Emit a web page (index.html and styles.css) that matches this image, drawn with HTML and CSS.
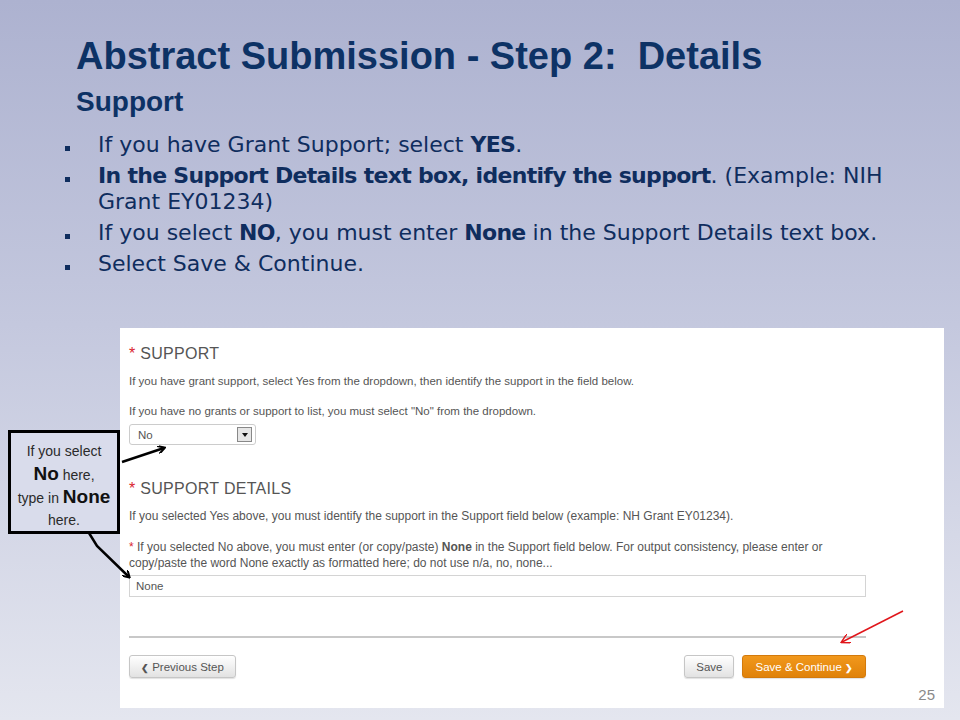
FILE: index.html
```html
<!DOCTYPE html>
<html lang="en">
<head>
    <meta charset="UTF-8">
    <meta name="viewport" content="width=device-width, initial-scale=1.0">
    <title>Abstract Submission - Step 2</title>
    <link rel="stylesheet" href="styles.css">
</head>
<body>
    <div class="slide">
        <h1 class="title">Abstract Submission - Step 2:&nbsp; Details</h1>
        <h2 class="subtitle">Support</h2>

        <ul class="bullets">
            <li>If you have Grant Support; select <b>YES</b>.</li>
            <li><b>In the Support Details text box, identify the support</b>. (Example: NIH Grant EY01234)</li>
            <li>If you select <b>NO</b>, you must enter <b>None</b> in the Support Details text box.</li>
            <li>Select Save &amp; Continue.</li>
        </ul>

        <div class="panel">
            <h3 class="field-title"><span class="req">*</span> SUPPORT</h3>
            <p class="help">If you have grant support, select Yes from the dropdown, then identify the support in the field below.</p>
            <p class="help">If you have no grants or support to list, you must select "No" from the dropdown.</p>
            <div class="select">
                <span>No</span>
                <span class="select-btn"><span class="caret"></span></span>
            </div>

            <h3 class="field-title details"><span class="req">*</span> SUPPORT DETAILS</h3>
            <p class="help wide">If you selected Yes above, you must identify the support in the Support field below (example: NH Grant EY01234).</p>
            <p class="help wide note"><span class="req">*</span> If you selected No above, you must enter (or copy/paste) <b>None</b> in the Support field below. For output consistency, please enter or copy/paste the word None exactly as formatted here; do not use n/a, no, none...</p>
            <div class="text-input">None</div>

            <div class="divider"></div>

            <div class="actions">
                <button class="btn"><span class="chev">&#10094;</span> Previous Step</button>
                <div class="actions-right">
                    <button class="btn">Save</button>
                    <button class="btn btn-orange">Save &amp; Continue <span class="chev">&#10095;</span></button>
                </div>
            </div>
            <div class="page-num">25</div>
        </div>

        <div class="callout">
            <div>If you select</div>
            <div><span class="big">No</span> here,</div>
            <div>type in <span class="big">None</span></div>
            <div>here.</div>
        </div>

        <svg class="arrows" width="960" height="720" viewBox="0 0 960 720">
            <defs>
                <marker id="headBlack" markerWidth="8" markerHeight="8" refX="6" refY="4" orient="auto" markerUnits="userSpaceOnUse">
                    <path d="M0,0 L7,4 L0,8" fill="none" stroke="#000" stroke-width="2"/>
                </marker>
                <marker id="headRed" markerWidth="10" markerHeight="10" refX="8" refY="5" orient="auto" markerUnits="userSpaceOnUse">
                    <path d="M0,0 L9,5 L0,10" fill="none" stroke="#e0161b" stroke-width="1.5"/>
                </marker>
            </defs>
            <line x1="122" y1="462" x2="164" y2="448" stroke="#000" stroke-width="2.5" marker-end="url(#headBlack)"/>
            <path d="M89 533 L97 546 L129 577" fill="none" stroke="#000" stroke-width="2.5" marker-end="url(#headBlack)"/>
            <line x1="903" y1="611" x2="842" y2="642" stroke="#e0161b" stroke-width="1.5" marker-end="url(#headRed)"/>
        </svg>
    </div>
</body>
</html>
```

FILE: styles.css
```css
body {
    margin: 0;
    padding: 0;
    font-family: "Liberation Sans", Arial, sans-serif;
}

.slide {
    position: relative;
    width: 960px;
    height: 720px;
    overflow: hidden;
    background: linear-gradient(to bottom, #adb2d0 0%, #c4c8de 45%, #e4e6ef 100%);
}

.title {
    margin: 0;
    padding: 34px 0 0 76px;
    font-size: 38px;
    line-height: 44px;
    font-weight: bold;
    color: #0d3265;
}

.subtitle {
    margin: 7px 0 0 0;
    padding-left: 76px;
    font-size: 28px;
    line-height: 34px;
    font-weight: bold;
    color: #0d3265;
}

.bullets {
    list-style: none;
    margin: 13px 0 0 0;
    padding: 0 50px 0 98px;
    color: #0f2d5e;
    font-family: "DejaVu Sans", Verdana, sans-serif;
    font-size: 22px;
    line-height: 26px;
}

.bullets li {
    position: relative;
    margin-bottom: 5px;
}

.bullets li:last-child {
    margin-bottom: 0;
}

.bullets li::before {
    content: "";
    position: absolute;
    left: -33px;
    top: 14px;
    width: 5px;
    height: 5px;
    background: #0f2d5e;
}

.bullets b {
    font-weight: bold;
    letter-spacing: -0.7px;
}

.panel {
    position: relative;
    margin: 51px 0 0 120px;
    width: 824px;
    height: 380px;
    box-sizing: border-box;
    padding: 16px 78px 0 9px;
    background: #fff;
    color: #555;
}

.field-title {
    margin: 0;
    font-size: 16px;
    line-height: 20px;
    font-weight: normal;
    color: #555;
    letter-spacing: 0.3px;
}

.field-title.details {
    margin-top: 34px;
}

.req {
    color: #d9262e;
}

.help {
    margin: 9px 0 0 0;
    font-size: 11.5px;
    line-height: 16px;
    color: #555;
}

.help.wide {
    font-size: 12px;
}

.help + .help {
    margin-top: 14px;
}

.help.note {
    margin-top: 15px;
}

.select {
    display: flex;
    align-items: center;
    justify-content: space-between;
    width: 127px;
    height: 21px;
    margin-top: 5px;
    box-sizing: border-box;
    padding: 0 3px 0 8px;
    border: 1px solid #ccc;
    border-radius: 3px;
    font-size: 11.5px;
    color: #555;
}

.select-btn {
    display: flex;
    align-items: center;
    justify-content: center;
    width: 13px;
    height: 13px;
    border: 1px solid #888;
    background: #e6e6e6;
}

.caret {
    width: 0;
    height: 0;
    border-left: 3px solid transparent;
    border-right: 3px solid transparent;
    border-top: 4px solid #111;
}

.text-input {
    height: 22px;
    margin-top: 4px;
    box-sizing: border-box;
    padding: 0 6px;
    border: 1px solid #d4d4d4;
    font-size: 11.5px;
    line-height: 20px;
    color: #555;
}

.divider {
    height: 2px;
    margin-top: 39px;
    background: #c8c8c8;
}

.actions {
    display: flex;
    justify-content: space-between;
    margin-top: 17px;
}

.actions-right {
    display: flex;
    gap: 8px;
}

.btn {
    height: 23px;
    padding: 0 11px;
    font-family: "Liberation Sans", Arial, sans-serif;
    font-size: 11.5px;
    color: #555;
    background: linear-gradient(to bottom, #ffffff, #e2e2e2);
    border: 1px solid #c6c6c6;
    border-radius: 3px;
    box-shadow: 0 1px 1px rgba(0, 0, 0, 0.12);
}

.btn .chev {
    font-size: 9px;
    font-weight: bold;
}

.btn-orange {
    padding: 0 12px;
    color: #fff;
    background: linear-gradient(to bottom, #f1981c, #e0820a);
    border-color: #d37a0c;
}

.page-num {
    position: absolute;
    right: 9px;
    bottom: 5px;
    font-size: 15px;
    color: #8a8a8a;
}

.callout {
    position: absolute;
    left: 8px;
    top: 430px;
    width: 112px;
    height: 104px;
    box-sizing: border-box;
    padding-top: 8px;
    border: 3px solid #000;
    background: #d9dceb;
    text-align: center;
    font-size: 14px;
    line-height: 21.5px;
    color: #2a2a2a;
}

.callout .big {
    font-size: 19px;
    font-weight: bold;
    color: #111;
}

.arrows {
    position: absolute;
    left: 0;
    top: 0;
    pointer-events: none;
}
```
